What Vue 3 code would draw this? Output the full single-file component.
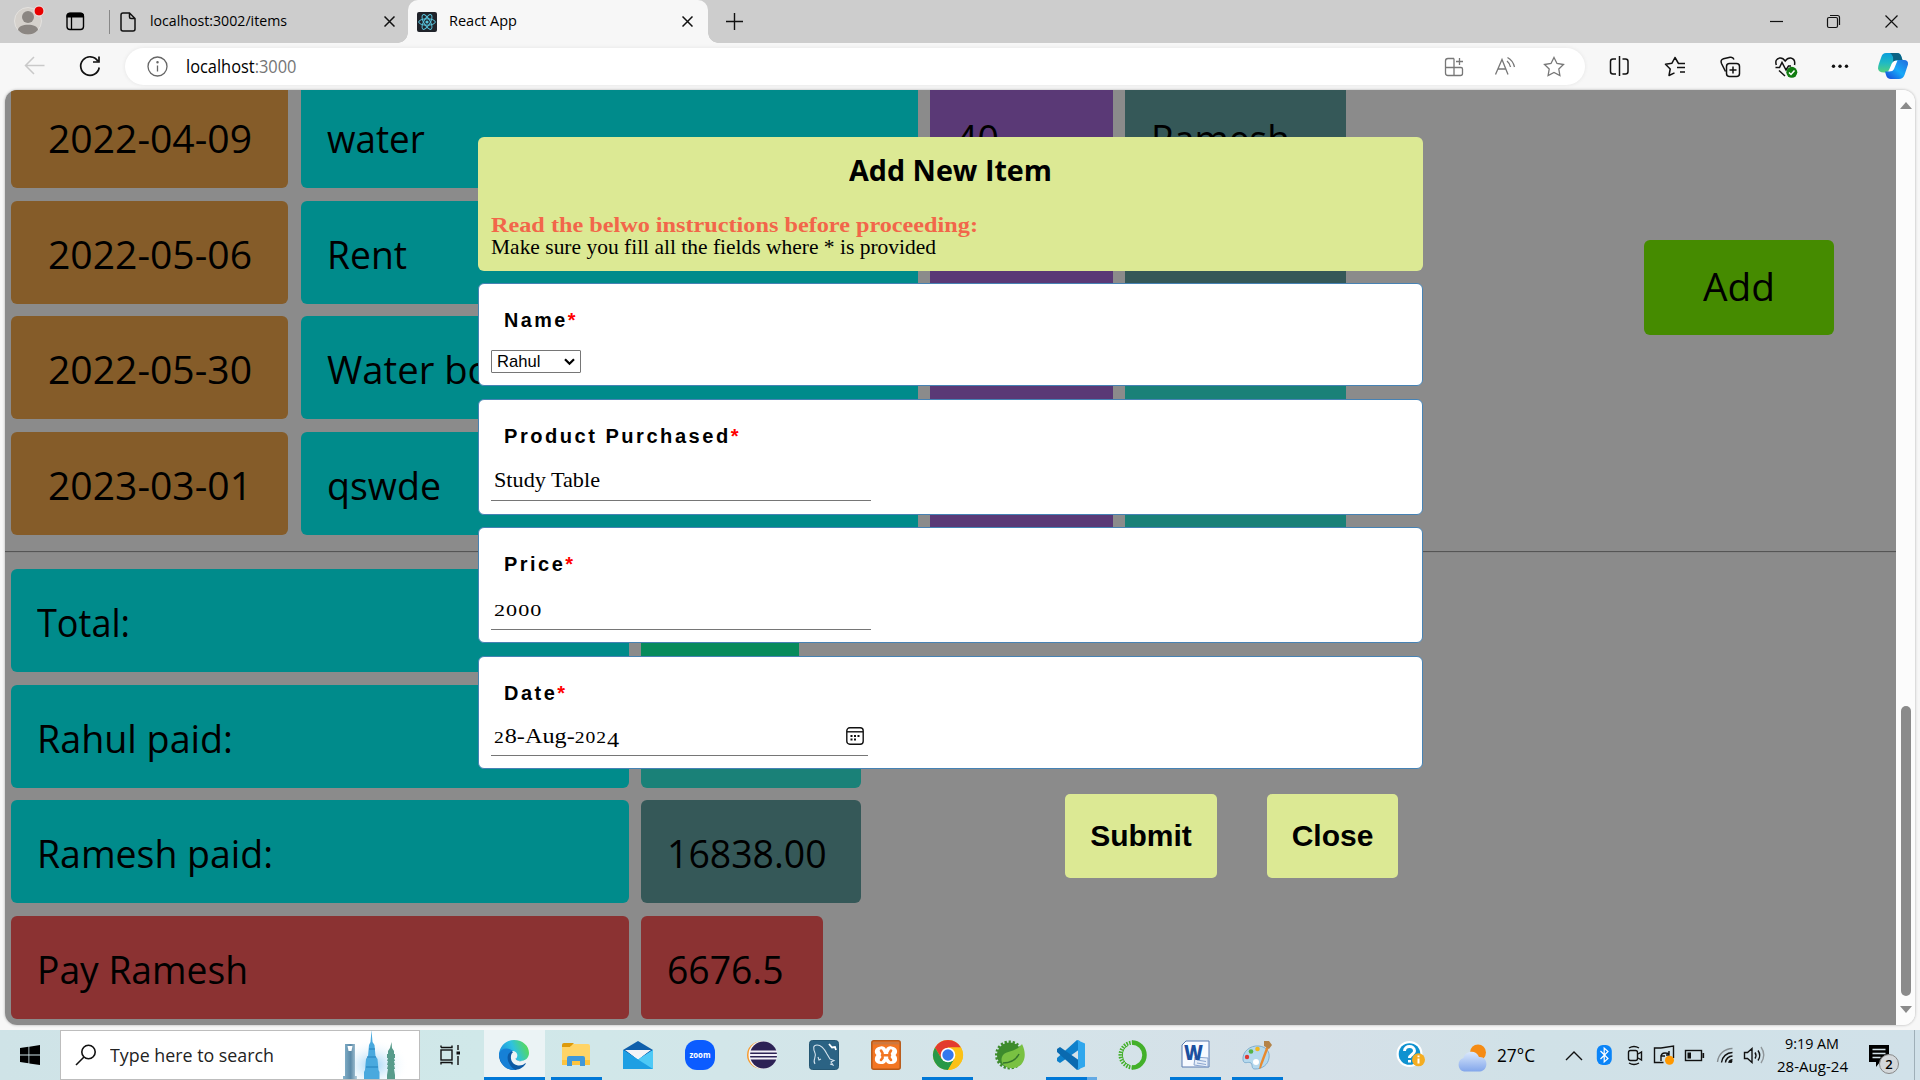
<script setup>
const rows = [
  { date: '2022-04-09', dw: 204, item: 'water', iw: 97.7, price: '40', who: 'Ramesh', cls: 'ramesh' },
  { date: '2022-05-06', dw: 204, item: 'Rent', iw: 80, price: '', who: '', cls: 'ramesh' },
  { date: '2022-05-30', dw: 204, item: 'Water bottle', iw: 222, price: '', who: '', cls: 'rahul' },
  { date: '2023-03-01', dw: 204, item: 'qswde', iw: 114, price: '', who: '', cls: 'rahul' },
]

const totals = [
  { label: 'Total:', lw: 93, value: '', vw: 0, width: 158, cls: 'total' },
  { label: 'Rahul paid:', lw: 196, value: '', vw: 0, width: 220, cls: 'rahul' },
  { label: 'Ramesh paid:', lw: 236, value: '16838.00', vw: 159.6, width: 220, cls: 'ramesh' },
  { label: 'Pay Ramesh', lw: 211, value: '6676.5', vw: 116.5, width: 182, cls: 'owe' },
]

// Condenses or widens a run of text so that it takes exactly the given width.
const vFit = {
  mounted(el, { value }) {
    const natural = el.getBoundingClientRect().width
    if (!natural || !value) return
    el.style.transform = `scaleX(${value / natural})`
    el.style.marginRight = `${value - natural}px`
  },
}
</script>

<template>
  <div class="screen">
    <div class="tabs">
      <svg class="lead" width="112" height="43" viewBox="0 0 112 43">
        <circle cx="28" cy="21" r="13.5" fill="#d5d1cc" stroke="#e4e2df" />
        <circle cx="28" cy="17" r="6" fill="#8b8682" />
        <path d="M18 30c0-7 20-7 20 0-5 6-15 6-20 0z" fill="#8b8682" />
        <circle cx="39" cy="11" r="5" fill="#e80000" stroke="#eee" />
        <rect x="67" y="13.5" width="16.5" height="16" rx="3" fill="none" stroke="#000" stroke-width="1.4" />
        <path d="M66.500 17.500v-1.500a3.500 3.500 0 0 1 3.500-3.500h10.500a3.500 3.500 0 0 1 3.500 3.500v1.500z" fill="#000" />
        <path d="M71.500 17v12" stroke="#000" stroke-width="1.300" />
        <path d="M109.500 10v24" stroke="#888" />
      </svg>
      <div class="tab first">
        <svg width="16" height="20" viewBox="0 0 16 20" fill="none" stroke="#111" stroke-width="1.500"><path d="M3 1h6.500L15 6.500V17q0 2-2 2H3q-2 0-2-2V3q0-2 2-2zM9.500 1v4q0 1.500 1.500 1.500h4" /></svg>
        <span class="name"><span v-fit="137" class="fit">localhost:3002/items</span></span>
        <svg class="x" width="11" height="11" viewBox="0 0 11 11" stroke="#111" stroke-width="1.500"><path d="M.5.5l10 10M10.500.5l-10 10" /></svg>
      </div>
      <div class="tab active">
        <svg width="20" height="20" viewBox="0 0 20 20"><rect width="20" height="20" rx="2" fill="#20232a" /><g fill="none" stroke="#58c4dc" stroke-width="1"><ellipse cx="10" cy="10" rx="8.300" ry="3.200" /><ellipse cx="10" cy="10" rx="8.300" ry="3.200" transform="rotate(60 10 10)" /><ellipse cx="10" cy="10" rx="8.300" ry="3.200" transform="rotate(120 10 10)" /></g><circle cx="10" cy="10" r="1.600" fill="#58c4dc" /></svg>
        <span class="name"><span v-fit="68" class="fit">React App</span></span>
        <svg class="x" width="11" height="11" viewBox="0 0 11 11" stroke="#111" stroke-width="1.500"><path d="M.5.5l10 10M10.500.5l-10 10" /></svg>
      </div>
      <svg class="plus" width="17" height="17" viewBox="0 0 17 17" stroke="#111" stroke-width="1.400"><path d="M8.500 0v17M0 8.500h17" /></svg>
      <svg class="win" width="136" height="43" viewBox="0 0 136 43" fill="none" stroke="#111" stroke-width="1.200"><path d="M6 21.500h13" /><rect x="63.500" y="17.500" width="10" height="10" rx="1.500" /><path d="M66 15.500h7.500q2 0 2 2V25M121.500 15.500l12 12M133.500 15.500l-12 12" /></svg>
    </div>

    <div class="toolbar">
      <svg width="125" height="47" viewBox="0 0 125 47" fill="none" stroke-width="1.500">
        <path d="M44.500 22.500h-19M34 14l-8.500 8.500L34 31" stroke="#c9c9c9" />
        <path d="M97.800 18a9.300 9.300 0 1 0 1.400 6.500M99 13.500V19h-6" stroke="#111" stroke-width="1.700" />
      </svg>
      <div class="pill">
        <svg width="21" height="21" viewBox="0 0 21 21" fill="none" stroke="#666" stroke-width="1.300"><circle cx="10.500" cy="10.500" r="9.500" /><path d="M10.500 9.500v6" /><circle cx="10.500" cy="6.300" r=".6" fill="#666" /></svg>
        <span class="url"><span v-fit="110.5" class="fit">localhost<i>:3000</i></span></span>
        <svg class="pillicons" width="125" height="37" viewBox="0 0 125 37" fill="none" stroke="#777" stroke-width="1.300">
          <path d="M14 10.500H8q-2.500 0-2.500 2.500v12q0 2.500 2.500 2.500h12.500q2 0 2-2V21q0-1.500-1.500-1.500H5.500M14 10.500v17M19.500 10v7M16 13.500h7" />
          <path d="M55.500 26.500L62 11.500l6 15M58 21h8M67 13q3 2.500 3.500 6M67.500 9.500q5.500 3 7 9.500" />
          <path d="M114 9.500l3 6 6.500 1-4.700 4.600 1.100 6.500-5.900-3.100-5.900 3.100 1.100-6.500-4.700-4.600 6.500-1z" />
        </svg>
      </div>
      <svg class="tools" width="335" height="47" viewBox="1585 43 335 47" fill="none" stroke="#111" stroke-width="1.500">
        <path d="M1616 59h-3q-2.500 0-2.500 2.500v10q0 2.500 2.500 2.500h3M1622.500 59h3q2.500 0 2.500 2.500v10q0 2.500-2.500 2.500h-3M1619.500 56v20" />
        <path d="M1676.500 64h-3.500l-1.400-.5-3.100-6-3 5.500-6 1" transform="translate(6.500 0)" stroke="none" />
        <path d="M1685 63.500h-6.500l-3.500-6-3 5.700-6.500 1.100 4.700 4.700-1.200 6.500 5.500-2.700M1677 67.500h8M1680 72h5" stroke-linejoin="round" />
        <path d="M1725.500 71.500l-4-8q-1.500-3.500 2-4.700l6.500-1.500q3-.6 4 2.200" /><rect x="1726.500" y="63.500" width="13" height="13" rx="3" /><path d="M1733 66.500v7M1729.500 70h7" />
        <path d="M1776.300 65q-1.800-6 3.500-7 3.200-.3 5.400 3 2.200-3.300 5.500-3 5 1 3.800 7M1775.500 67.500h4l2.500-5 4 7.500 2.500-4h2.500M1779 70.500l6 5.500" /><circle cx="1791.800" cy="72.300" r="5.500" fill="#107c10" stroke="none" /><path d="M1789 72.500l2 2 3.500-4" stroke="#fff" />
        <g fill="#111" stroke="none"><circle cx="1833.500" cy="66.300" r="1.700" /><circle cx="1840" cy="66.300" r="1.700" /><circle cx="1846.500" cy="66.300" r="1.700" /></g>
        <g stroke="none">
          <path d="M1886 53h11q3.500 0 4.500 4l1.500 5-11 1-3 7q-1.500 3-5 2.500-5.500 0-6-4 0-2 1-5l2.500-7q1-3.500 4.500-3.500z" fill="url(#cpA)" />
          <path d="M1899 79h-8q-4 0-5-4l-1-3.500h3q3 0 4-4l2-4.500q1-3 5-3h5q4.500 0 4 4.500l-3.500 10.500q-1.500 4-5.500 4z" fill="url(#cpB)" />
          <path d="M1893 53h4q3.500 0 4.500 4l1 3h-5.500q-2 0-2.700 2l-1.300 1q1-8-3-10z" fill="#0b6384" />
          <path d="M1892.500 62.500q1-2 5-2l-3.500 8.500q-1 2.500-5 2.500z" fill="#fff" />
        </g>
        <defs>
          <linearGradient id="cpA" x1="0" y1="0" x2="0" y2="1"><stop offset="0" stop-color="#0a9edb" /><stop offset=".5" stop-color="#1fb9c4" /><stop offset="1" stop-color="#54d17c" /></linearGradient>
          <linearGradient id="cpB" x1="0" y1="1" x2="1" y2="0"><stop offset="0" stop-color="#1442d6" /><stop offset=".5" stop-color="#18a9f8" /><stop offset="1" stop-color="#236bdc" /></linearGradient>
        </defs>
      </svg>
    </div>

    <div class="frame">
      <div class="view">
        <div class="page">
          <div class="upper">
            <div class="list">
              <div v-for="r in rows" :key="r.date" class="row">
                <div class="cell date"><span v-fit="r.dw" class="fit">{{ r.date }}</span></div>
                <div class="cell item"><span v-fit="r.iw" class="fit">{{ r.item }}</span></div>
                <div class="cell price"><span v-if="r.price" v-fit="43" class="fit">{{ r.price }}</span></div>
                <div class="cell who" :class="r.cls"><span v-if="r.who" v-fit="139" class="fit">{{ r.who }}</span></div>
              </div>
            </div>
            <div class="add"><span v-fit="72" class="fit">Add</span></div>
          </div>
          <div class="rule"></div>
          <div class="totals">
            <div v-for="t in totals" :key="t.label" class="row">
              <div class="cell label" :class="{ owe: t.cls === 'owe' }"><span v-fit="t.lw" class="fit">{{ t.label }}</span></div>
              <div class="cell" :class="t.cls" :style="{ width: t.width + 'px' }"><span v-if="t.value" v-fit="t.vw" class="fit">{{ t.value }}</span></div>
            </div>
          </div>
        </div>

        <div class="modal">
          <div class="head">
            <div class="title"><span v-fit="203" class="fit">Add New Item</span></div>
            <div class="warn"><span v-fit="487" class="fit">Read the belwo instructions before proceeding:</span></div>
            <div class="note"><span v-fit="445" class="fit">Make sure you fill all the fields where * is provided</span></div>
          </div>
          <div class="card c-name">
            <div class="lbl"><span v-fit="74" class="fit">Name<b>*</b></span></div>
            <div class="select"><span>Rahul</span><svg width="11" height="8" viewBox="0 0 11 8" fill="none" stroke="#000" stroke-width="2.200"><path d="M1 1.200l4.500 4.600L10 1.200" /></svg></div>
          </div>
          <div class="card c-prod">
            <div class="lbl"><span v-fit="237" class="fit">Product Purchased<b>*</b></span></div>
            <div class="input"><span v-fit="106" class="fit">Study Table</span></div>
          </div>
          <div class="card c-price">
            <div class="lbl"><span v-fit="71.5" class="fit">Price<b>*</b></span></div>
            <div class="input"><span v-fit="48.5" class="fit"><span class="low">2000</span></span></div>
          </div>
          <div class="card c-date">
            <div class="lbl"><span v-fit="63.5" class="fit">Date<b>*</b></span></div>
            <div class="input"><span v-fit="125" class="fit"><span class="low">2</span>8-Aug-<span class="low">202</span><span class="drop">4</span></span>
              <svg width="18" height="18" viewBox="0 0 18 18" fill="none" stroke="#111" stroke-width="1.400"><rect x=".8" y=".8" width="16.400" height="16.400" rx="3" /><path d="M1 4.800h16" /><path d="M4.500 9h2M8 9h2M11.500 9h2M4.500 12.500h2M8 12.500h2" stroke-width="2" /></svg>
            </div>
          </div>
          <div class="actions"><div class="btn">Submit</div><div class="btn close">Close</div></div>
        </div>
      </div>
      <div class="scroll"><span class="up"></span><span class="thumb"></span><span class="down"></span></div>
    </div>

    <div class="taskbar">
      <div class="start"><svg width="20" height="20" viewBox="0 0 20 20"><path d="M0 3l8.500-1.200v7.700H0zM9.300 1.700L20 0v9.500H9.300zM0 10.400h8.500v7.800L0 17zM9.300 10.400H20V20L9.300 18.400z" /></svg></div>
      <div class="search">
        <svg width="22" height="22" viewBox="0 0 22 22" fill="none" stroke="#111" stroke-width="1.600"><circle cx="13.500" cy="8" r="6.700" /><path d="M9 13l-8 8" /></svg>
        <span class="hint"><span v-fit="164" class="fit">Type here to search</span></span>
        <svg class="towers" width="76" height="50" viewBox="0 0 76 50">
          <defs><radialGradient id="glow"><stop offset="0" stop-color="#9bd2f5" /><stop offset="1" stop-color="#fff" stop-opacity="0" /></radialGradient><linearGradient id="tw"><stop offset="0" stop-color="#86b4cd" /><stop offset=".55" stop-color="#5b8aa8" /><stop offset="1" stop-color="#b4cfdd" /></linearGradient></defs>
          <ellipse cx="38" cy="36" rx="36" ry="26" fill="url(#glow)" />
          <path d="M10 15h10v32h2v3H8v-3h2z" fill="url(#tw)" /><path d="M12.500 17h5l-1 5h-3z" fill="#fff" />
          <path d="M36.500 1l1 12 2 3 1 11 2 3 1 11 1 2v7H29v-7l1-2 1-11 2-3 1-11 1.500-3z" fill="#49a9de" /><path d="M34 20h6M32 28h9M31 38h12" stroke="#2280bb" />
          <path d="M56.500 13l.5 6 2 3v3h1v4h-1l1 3h-1l1 4h-1l1 4h-1l1 6v4H52v-4l1-6h-1l1-4h-1l1-4h-1l1-3h-1v-4h1v-3l2-3z" fill="#579b8b" />
        </svg>
      </div>
      <div class="tview"><svg width="22" height="20" viewBox="0 0 22 20" fill="none" stroke="#111" stroke-width="1.400"><rect x="2" y="5" width="11" height="10" /><path d="M2 2.500V.5M2 2.500h11V.5M2 19.500v-2h11v2M19 0v5M19 11v9" /><path d="M17.500 8h3.500" stroke-width="3" /></svg></div>
      <div class="apps">
        <div class="app on edge"><svg viewBox="0 0 30 30"><defs><linearGradient id="eg" x1="0" y1=".6" x2="1" y2=".3"><stop offset="0" stop-color="#1b90df" /><stop offset=".5" stop-color="#2fc2df" /><stop offset="1" stop-color="#5bdc4c" /></linearGradient></defs><path d="M27 23.500C24 28 19.500 30 15 30A15 15 0 0 1 0 15C0 10 8 8 13 11l5 9z" fill="#0c59a4" /><path d="M0 14C1 5 8 0 15 0c9 0 15 6 15 13 0 5-4 8-8.500 8-3 0-5-1-4.300-2.500 2.500-3 .8-7.500-4.200-7.500C7 9 1 12 0 18z" fill="url(#eg)" /><path d="M0 14C2 8 9 7 14 11c-5 1-7 6-4 12 1.500 3.500 4 6 7 6.800Q6 31 1.500 21 0 17 0 14z" fill="#1680d6" /><path d="M12.500 14c1.500-3 5.500-1 5 2.500-.3 1.500-1.500 2.300 0 3.500 3 2 7 1.500 9.500 0q1.500 0 .5 2-3.500 4-8.500 3.500c-7-1.500-8-7.500-6.500-11.500z" fill="#eef3f5" /></svg></div>
        <div class="app on"><svg viewBox="0 0 30 30"><path d="M1 5q0-2 2-2h9l3 3h-5l-2 3H1z" fill="#dd9a0b" /><path d="M1 7h8l3-3h15q2 0 2 2v19H1z" fill="#ffd467" /><path d="M1 20h28v5H1z" fill="#fcc43f" /><path d="M6 26v-8q0-2 2-2h14q2 0 2 2v8h-5v-5h-8v5z" fill="#3f98da" /></svg></div>
        <div class="app"><svg viewBox="0 0 30 30"><path d="M0 10L15 1l15 9v8H0z" fill="#0f5fab" /><path d="M3 10h24L15 20z" fill="#f7f7f9" /><path d="M0 10l15 9.500L30 10v19H0z" fill="#25a7ea" /><path d="M2 10h26l-13 9z" fill="#f4f4f7" /><path d="M0 29V10l30 19z" fill="#1e9fe3" /><path d="M30 10v19L15 19.500z" fill="#4ec9f6" /></svg></div>
        <div class="app"><svg viewBox="0 0 30 30"><rect width="30" height="30" rx="12" fill="#0b5cff" /><text x="15" y="17.500" font-family="Open Sans, sans-serif" font-size="8" font-weight="700" fill="#fff" text-anchor="middle" textLength="21" lengthAdjust="spacingAndGlyphs">zoom</text></svg></div>
        <div class="app"><svg viewBox="0 0 30 30"><circle cx="13.500" cy="15" r="13.500" fill="#f79b2e" /><circle cx="15.500" cy="15" r="14" fill="#f6f5f8" /><circle cx="16.500" cy="15" r="13.500" fill="#2c2255" /><path d="M3 11.500h27M3 15h27M3 18.500h27" stroke="#f2eff8" stroke-width="2" /></svg></div>
        <div class="app"><svg viewBox="0 0 30 30"><rect x=".5" y=".5" width="29" height="29" rx="3" fill="#2b6384" stroke="#245672" /><path d="M6 24c-3-4 2-7 0-11-2-5-2-8 2-8 5 0 8 5 10 9l3 5 4 1.500-3 1.500 2 3-3-1M9 17l1 3 2-1" fill="none" stroke="#d3e2ec" stroke-width="1.100" /><path d="M20 4l3 3.500 3-.5 1 3" stroke="#fff" stroke-width="1.800" fill="none" /></svg></div>
        <div class="app"><svg viewBox="0 0 30 30"><rect x=".8" y=".8" width="28.400" height="28.400" rx="2" fill="#f37623" stroke="#b65818" stroke-width="1.500" /><path d="M2 2h26v2.500H2z" fill="#ce783f" /><path d="M9.500 6.500c2.500-.5 4.500.5 5.500 2.500 1-2 3-3 5.500-2.500 6 .5 7 6 4 8.500 3 3 2 9-4 9-2.500.3-4.500-.5-5.500-2.500-1 2-3 2.800-5.500 2.500-6 0-7-6-4-9-3-2.500-2-8 4-8.500z" fill="#fff" /><path d="M10 10.500l1.500 2.500v5L10 20M20 10.500L18.500 13v5l1.500 2M11 15.300h8" fill="none" stroke="#f37623" stroke-width="2.600" stroke-linecap="round" /></svg></div>
        <div class="app on"><svg viewBox="0 0 30 30"><circle cx="15" cy="15" r="15" fill="#fbc116" /><path d="M2 7.500A15 15 0 0 1 28 7.500H15l-6.500 11.200z" fill="#e33b2e" /><path d="M2 7.500l6.500 11.200h13L15 30A15 15 0 0 1 2 7.500z" fill="#279847" /><path d="M28 7.500H15l6.500 11.200L15 30A15 15 0 0 0 28 7.500z" fill="#fbc116" /><circle cx="15" cy="15" r="7.300" fill="#fff" /><circle cx="15" cy="15" r="5.700" fill="#3478ed" /></svg></div>
        <div class="app"><svg viewBox="0 0 30 30"><circle cx="14.500" cy="15" r="12.500" fill="#3d8b2c" /><circle cx="14.500" cy="15" r="13" fill="none" stroke="#3d8b2c" stroke-width="3" stroke-dasharray="2.200 1.800" /><path d="M27 4c6 12 2 24-10 24-8 0-12-6-10-11C9 10 21 13 27 4z" fill="#79c142" /><path d="M8 23c8 0 13-3 16-9" stroke="#35762c" stroke-width="1.500" fill="none" /></svg></div>
        <div class="app on two"><svg viewBox="0 0 30 30"><path d="M21 0l3 1v8L4 23l-3-2 0-3z" fill="#0e80cb" /><path d="M21 30l3-1v-8L4 7 1 9v3z" fill="#0a6ab0" /><path d="M21 0l8 3.500V26.500L21 30q1-1 1-3V3q0-2-1-3z" fill="#30a7ed" /></svg></div>
        <div class="app"><svg viewBox="0 0 30 30" fill="none"><path d="M14 2.500a12.500 12.500 0 1 1 0 25" stroke="#43b02a" stroke-width="4.500" /><path d="M15 27.500a12.500 12.500 0 0 1 0-25" stroke="#43b02a" stroke-width="4" stroke-dasharray="1.500 1.200" /><path d="M12 25.500a11 11 0 0 1-2-20" stroke="#43b02a" stroke-width="1" /></svg></div>
        <div class="app on"><svg viewBox="0 0 30 30"><path d="M6 1h23v26H2V5z" fill="#f7faff" stroke="#5a7baf" /><path d="M15 17l13 1v9l-14-2z" fill="#e5edf8" stroke="#8aa5cf" /><path d="M17 20l9 1.500M17 23l9 1.500" stroke="#8aa5cf" /><text x="13.500" y="20" font-family="Open Sans, sans-serif" font-size="21" font-weight="800" fill="#1c4f9f" text-anchor="middle" textLength="19" lengthAdjust="spacingAndGlyphs">W</text></svg></div>
        <div class="app on"><svg viewBox="0 0 30 30"><path d="M1 20C0 12 8 5 17 6c8 1 11 6 10 12-1 7-7 11-14 11-4 0-2-4-4-6-3-2-7 2-8-3z" fill="#b5d9ee" stroke="#80afd0" /><circle cx="5" cy="17" r="2.200" fill="#dd3833" /><circle cx="9" cy="11.500" r="2.300" fill="#55b34a" /><circle cx="15.500" cy="9" r="2.300" fill="#f1b71e" /><circle cx="14" cy="22" r="3" fill="#fff" /><path d="M25 5l2 2-8 21-2 1 1-5z" fill="#e78a2f" /><path d="M22 1l5 0 3 4-3 4-5-3z" fill="#b48349" /></svg></div>
      </div>
      <div class="tray">
        <svg class="trayleft" width="95" height="50" viewBox="1395 1030 95 50">
          <circle cx="1409.500" cy="1056.500" r="13" fill="#fff" /><circle cx="1409.500" cy="1056.500" r="10.800" fill="#0f92d0" /><path d="M1404.500 1053.500c0-6 10-6 10 0 0 3.500-5 3.500-5 7M1409.500 1062.500v2.500" fill="none" stroke="#fff" stroke-width="3" /><circle cx="1418.500" cy="1062.300" r="6.500" fill="#f4ad22" /><path d="M1418.500 1061v5M1418.500 1058v1.700" stroke="#fff" stroke-width="2" />
          <defs><linearGradient id="cl" x1="0" y1="0" x2="0" y2="1"><stop offset="0" stop-color="#dbe9fc" /><stop offset="1" stop-color="#82a6eb" /></linearGradient></defs>
          <circle cx="1478" cy="1055" r="8" fill="#f58b14" /><path d="M1464 1074a7 7 0 0 1-.5-13.500c2-8 13-8.500 15.500-1 9-1 10.500 13 1 14.500z" fill="url(#cl)" />
        </svg>
        <span class="temp"><span v-fit="38" class="fit">27°C</span></span>
        <svg class="icons" width="210" height="50" viewBox="1560 1030 210 50" fill="none" stroke="#111" stroke-width="1.400">
          <path d="M1566 1060l8-8 8 8" />
          <rect x="1596.800" y="1045" width="15" height="20" rx="6" fill="#0a84f8" stroke="none" /><path d="M1600.500 1051l7.500 7.500-3.800 3.500v-14l3.800 3.500-7.500 7.500" stroke="#fff" stroke-width="1.200" />
          <rect x="1628.500" y="1050.500" width="9" height="10" rx="2" /><path d="M1638 1054l3.500-2v8l-3.500-2M1629 1048q5-3 10 0M1629 1063q5 3 10 0" />
          <path d="M1661 1048h-6.500v14.500h9M1661 1048l12.500-2v12M1665 1056h-4v5M1661 1057q0-4 4-4t4 1.500M1669 1051v4h-3" /><circle cx="1669.500" cy="1060.300" r="4.500" fill="#ff9800" stroke="none" />
          <rect x="1685.500" y="1050.500" width="16" height="10" /><path d="M1703.300 1053v5" stroke-width="1.700" /><path d="M1687.500 1052.500h3.500v6h-3.500z" fill="#111" stroke="none" />
          <path d="M1717.500 1062a15 15 0 0 1 15-13.500" stroke="#858c90" /><path d="M1721.500 1062.500a11 11 0 0 1 11-10M1725.500 1062.500a7 7 0 0 1 7-6.500M1728.800 1062.800a4 4 0 0 1 3.700-3" /><circle cx="1730.800" cy="1061.500" r="1.500" fill="#111" stroke="none" />
          <path d="M1744.500 1052.500h3l4.500-4v14l-4.500-4h-3zM1755 1052.500q2 3 0 6M1758 1050.500q3.500 5 0 10" /><path d="M1761 1047q5.500 8 0 16" stroke="#90979b" />
        </svg>
        <div class="clock"><div><span v-fit="54" class="fit">9:19 AM</span></div><div><span v-fit="71" class="fit">28-Aug-24</span></div></div>
        <div class="notif"><svg width="20" height="22" viewBox="0 0 20 22"><path d="M0 0h20v17h-9l-4 5v-5H0z" /><path d="M3.500 4.500h13M3.500 8.500h13M3.500 12.500h8" stroke="#d2e1e8" stroke-width="1.300" /></svg><span class="badge">2</span></div>
        <span class="desk"></span>
      </div>
    </div>
  </div>
</template>

<style>
body { margin: 0; overflow: hidden; }
</style>

<style scoped>
* { box-sizing: border-box; }
.screen { width: 1920px; height: 1080px; display: flex; flex-direction: column; background: #f7f7f7; overflow: hidden; font-family: "Open Sans", sans-serif; color: #000; }
svg { display: block; flex: none; }
.fit { display: inline-block; transform-origin: 0 50%; white-space: nowrap; }

.tabs { height: 43px; flex: none; background: #cdcdcd; display: flex; align-items: center; }
.tab { height: 43px; display: flex; align-items: center; font-size: 14.700px; line-height: 20px; }
.tab .name { flex: 1; white-space: nowrap; padding-bottom: 3px; }
.tab.first { width: 296px; padding: 0 13px 0 8px; gap: 14px; border-bottom-right-radius: 8px; }
.tab.active { position: relative; width: 300px; padding: 0 15px 0 9px; gap: 12px; background: #f7f7f7; border-radius: 10px 10px 0 0; }
.tab.active::before, .tab.active::after { content: ""; position: absolute; bottom: 0; width: 10px; height: 10px; }
.tab.active::before { left: -10px; background: radial-gradient(circle at 0 0, #cdcdcd 9.500px, #f7f7f7 10px); }
.tab.active::after { right: -10px; background: radial-gradient(circle at 100% 0, #cdcdcd 9.500px, #f7f7f7 10px); }
.plus { margin-left: 18px; }
.win { margin-left: auto; margin-right: 20px; }

.toolbar { height: 47px; flex: none; display: flex; background: #f7f7f7; }
.pill { width: 1460px; height: 37px; margin-top: 5px; border-radius: 19px; background: #fff; box-shadow: 0 0 4px rgba(0, 0, 0, .08); display: flex; align-items: center; padding-left: 22px; }
.url { margin-left: 18px; font-size: 17.600px; line-height: 24px; flex: 1; white-space: nowrap; padding-bottom: 2px; }
.url i { font-style: normal; color: #767676; }
.pillicons { margin-right: 20px; }

.frame { height: 935px; flex: none; margin: 0 5px; display: flex; border-radius: 12px; overflow: hidden; box-shadow: 0 0 3px rgba(0, 0, 0, .3); }
.view { position: relative; width: 1891px; height: 935px; overflow: hidden; background: #8b8b8b; }
.page { padding-left: 6px; font-size: 39.200px; }
.upper { display: flex; align-items: flex-start; margin-top: -4.700px; }
.list, .totals { display: flex; flex-direction: column; gap: 12.500px; }
.totals { gap: 12.600px; margin-top: 17px; }
.row { display: flex; gap: 12px; height: 103px; }
.cell { border-radius: 6px; padding: 2px 0 0 25.500px; display: flex; align-items: center; white-space: nowrap; overflow: hidden; line-height: 53px; }
.date { width: 277px; padding-left: 36.500px; background: #855c29; margin-right: 1px; }
.item { width: 617px; background: #008b8b; }
.price { width: 183px; background: #5a3976; }
.who { width: 221px; }
.ramesh { background: #355858; }
.rahul { background: #1a8178; }
.total { background: #078b5c; }
.label { width: 618px; background: #008b8b; }
.owe { background: #8b3232; }
.add { width: 190px; height: 95px; margin: 154.700px 0 0 298px; padding-bottom: 4px; border-radius: 6px; background: #458b00; display: flex; align-items: center; justify-content: center; line-height: 53px; }
.rule { height: 1px; background: #555; margin: 16.200px 0 0 -6px; box-shadow: 0 1px #858585; }

.modal { position: absolute; left: 473px; top: 47px; width: 945px; display: flex; flex-direction: column; }
.head { height: 134px; padding: 13px 13px 0; border-radius: 6px; background: #dce994; font: 21px/22px "Liberation Serif", serif; }
.title { height: 40px; margin-bottom: 24px; display: flex; justify-content: center; font: 700 28.300px/40px "Open Sans", sans-serif; }
.warn { height: 22px; color: #f2664a; font-weight: 700; }
.note { height: 22px; }
.card { background: #fff; border: 1px solid #4682b4; border-radius: 6px; padding: 24px 12px 0; }
.c-name { height: 103px; margin-top: 12px; }
.c-prod { height: 116px; margin-top: 13px; }
.c-price { height: 116px; margin-top: 12px; }
.c-date { height: 113px; margin-top: 13px; }
.lbl { height: 24px; margin-left: 13px; font: 700 20px/24px "Liberation Sans", Arial, sans-serif; letter-spacing: 2.500px; white-space: nowrap; }
.lbl b { color: #f00; }
.select { width: 90px; height: 23px; margin-top: 18px; border: 1px solid #767676; border-radius: 1px; padding: 0 5px; display: flex; align-items: center; justify-content: space-between; font: 16.600px/20px "Liberation Sans", Arial, sans-serif; }
.input { width: 380px; height: 32px; margin-top: 21px; padding-left: 3px; border-bottom: 1px solid #767676; display: flex; align-items: flex-start; justify-content: space-between; font: 21px/22px "Liberation Serif", serif; }
.c-price .input { margin-top: 22px; }
.c-date .input { width: 377px; height: 31px; margin-top: 20px; }
.input svg { margin: 2px 4px 0 0; }
.low { font-size: 17px; letter-spacing: .8px; }
.drop { position: relative; top: 4px; }
.actions { display: flex; justify-content: flex-end; gap: 50px; margin: 25px 25px 0 0; }
.btn { width: 152px; height: 84px; border-radius: 5px; background: #dce994; text-align: center; font: 700 30px/84px "Liberation Sans", Arial, sans-serif; }
.btn.close { width: 131px; }

.scroll { width: 19px; background: #fcfcfc; display: flex; flex-direction: column; align-items: center; padding: 12px 0; }
.up, .down { border: 6px solid transparent; height: 0; }
.up { border-top: 0; border-bottom: 7px solid #8b8b8b; }
.down { border-bottom: 0; border-top: 7px solid #8b8b8b; margin-top: auto; }
.thumb { width: 10px; height: 290px; margin-top: 597px; border-radius: 5px; background: #8b8b8b; }

.taskbar { height: 50px; flex: none; margin-top: 5px; display: flex; background: linear-gradient(90deg, #cfe3e7, #d0e8e9 25%, #d4e4e9 50%, #d5e0e8 68%, #d0e1e7 80%, #d1e1e9); }
.start { width: 60px; padding: 15px 0 0 20px; }
.search { width: 360px; background: #fff; border: 1px solid #bdbdbd; display: flex; align-items: center; padding-left: 14px; }
.hint { font-size: 18.600px; line-height: 26px; margin-left: 13px; flex: 1; white-space: nowrap; color: #222; }
.towers { margin-right: 8px; align-self: flex-end; }
.tview { width: 63.500px; padding: 15px 0 0 19px; }
.apps { display: flex; }
.app { position: relative; width: 61.900px; height: 50px; padding-top: 10px; display: flex; justify-content: center; }
.app svg { width: 30px; height: 30px; overflow: visible; }
.app.on::after { content: ""; position: absolute; left: 5.500px; bottom: 0; width: 51px; height: 3px; background: #0078d7; }
.app.edge { background: #ebf3f5; }
.app.edge::after { left: 0; width: 61.900px; }
.app.two::after { background: linear-gradient(90deg, #0078d7 41px, #64aae4 41px); }
.tray { display: flex; margin-left: auto; width: 525px; }
.trayleft { margin-top: -5px; height: 55px; width: 95px; }
.temp { width: 68px; padding-left: 7px; font-size: 18.600px; line-height: 50px; white-space: nowrap; }
.icons { margin-left: 2px; }
.clock { width: 84px; text-align: center; font-size: 14.700px; line-height: 23px; padding-top: 2px; }
.notif { position: relative; width: 57px; padding: 15px 0 0 15px; }
.badge { position: absolute; left: 25px; top: 24px; width: 20px; height: 20px; border: 1px solid #888; border-radius: 50%; background: #d3d7da; font-size: 13px; font-weight: 600; line-height: 18px; text-align: center; }
.desk { width: 1px; height: 50px; margin-left: 3px; background: #9fafb8; }
</style>
